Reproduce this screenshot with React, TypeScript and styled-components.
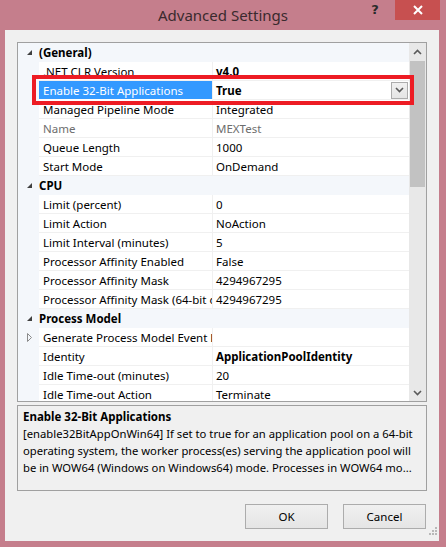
import styled, { createGlobalStyle } from "styled-components";

const Global = createGlobalStyle`
  html, body {
    margin: 0;
    padding: 0;
    background: #c57e8c;
  }
  body {
    font-family: "Segoe UI", "Noto Sans", "Open Sans", sans-serif;
    font-size: 11.5px;
    color: #000;
  }
`;

const Window = styled.div`
  width: 446px;
  height: 547px;
  display: flex;
  flex-direction: column;
  background: #c57e8c;
`;

const TitleBar = styled.div`
  height: 30px;
  display: grid;
  grid-template-columns: 1fr auto 1fr;
  align-items: start;
`;

const Title = styled.div`
  grid-column: 2;
  font-size: 15px;
  line-height: 30px;
  color: #3a2a2e;
`;

const Caption = styled.div`
  grid-column: 3;
  display: flex;
  justify-content: flex-end;
  align-items: flex-start;
  padding-right: 6px;
`;

const HelpButton = styled.div`
  width: 26px;
  height: 20px;
  font-family: "DejaVu Sans", sans-serif;
  font-weight: bold;
  font-size: 13px;
  line-height: 20px;
  text-align: center;
  color: #2b2b2b;
  margin-right: 7px;
`;

const CloseButton = styled.div`
  width: 45px;
  height: 20px;
  background: #c75050;
  display: flex;
  align-items: center;
  justify-content: center;
`;

const Client = styled.div`
  flex: 1;
  margin: 0 7px 6px 5px;
  background: #f0f0f0;
  padding: 12px 12px 0 12px;
  display: flex;
  flex-direction: column;
  position: relative;
`;

const GridWrap = styled.div`
  position: relative;
`;

const Grid = styled.div`
  height: 358px;
  border: 1px solid #a0a0a0;
  display: flex;
  background: #f4f7fb;
  overflow: hidden;
`;

const Rows = styled.div`
  flex: 1;
  overflow: hidden;
`;

const CategoryRow = styled.div`
  height: 19px;
  display: flex;
  align-items: center;
  font-weight: bold;
`;

const Gutter = styled.div`
  width: 21px;
  flex: none;
  height: 100%;
  display: flex;
  align-items: center;
  justify-content: center;
  padding-left: 2px;
  box-sizing: border-box;
`;

const PropRow = styled.div`
  height: 19px;
  display: flex;
`;

const NameCell = styled.div<{ $selected?: boolean; $disabled?: boolean }>`
  width: 174px;
  flex: none;
  box-sizing: border-box;
  padding-left: 4px;
  display: flex;
  align-items: center;
  white-space: nowrap;
  overflow: hidden;
  background: ${(p) => (p.$selected ? "#3399ff" : "#fff")};
  color: ${(p) => (p.$selected ? "#fff" : p.$disabled ? "#6d6d6d" : "#000")};
  border-bottom: 1px solid ${(p) => (p.$selected ? "#fff" : "#f0f0f0")};
  border-right: 1px solid #f0f0f0;
`;

const ValueCell = styled.div<{ $bold?: boolean; $disabled?: boolean }>`
  flex: 1;
  box-sizing: border-box;
  padding-left: 3px;
  display: flex;
  align-items: center;
  white-space: nowrap;
  overflow: hidden;
  background: #fff;
  font-weight: ${(p) => (p.$bold ? "bold" : "normal")};
  color: ${(p) => (p.$disabled ? "#6d6d6d" : "#000")};
  border-bottom: 1px solid #f0f0f0;
`;

const ValueText = styled.span`
  flex: 1;
`;

const DropButton = styled.div`
  width: 17px;
  height: 17px;
  box-sizing: border-box;
  border: 1px solid #acacac;
  background: linear-gradient(#f0f0f0, #e5e5e5);
  display: flex;
  align-items: center;
  justify-content: center;
  margin-right: 1px;
`;

const ScrollBar = styled.div`
  width: 17px;
  flex: none;
  background: #e8e8e8;
  display: flex;
  flex-direction: column;
  align-items: center;
`;

const ScrollArrow = styled.div`
  height: 17px;
  width: 100%;
  display: flex;
  align-items: center;
  justify-content: center;
`;

const ScrollThumb = styled.div`
  width: 15px;
  height: 126px;
  background: #c2c2c2;
  margin-top: 1px;
`;

const ScrollTrack = styled.div`
  flex: 1;
`;

const Highlight = styled.div`
  position: absolute;
  left: 15px;
  top: 33px;
  width: 374px;
  height: 22px;
  border: 4px solid #ed1c24;
  pointer-events: none;
`;

const Description = styled.div`
  margin-top: 3px;
  height: 82px;
  border: 1px solid #a0a0a0;
  padding: 2px 0 0 5px;
  overflow: hidden;
  font-size: 11.25px;
`;

const DescTitle = styled.div`
  font-weight: bold;
  font-size: 11.5px;
  line-height: 17px;
`;

const DescLine = styled.div`
  line-height: 17px;
  white-space: nowrap;
  overflow: hidden;
`;

const ButtonRow = styled.div`
  margin-top: 13px;
  display: flex;
  justify-content: flex-end;
  gap: 14px;
`;

const Button = styled.div`
  width: 83px;
  height: 25px;
  box-sizing: border-box;
  border: 1px solid #acacac;
  background: linear-gradient(#f0f0f0, #e5e5e5);
  display: flex;
  align-items: center;
  justify-content: center;
  margin-right: 1px;
`;

const Grip = styled.div`
  position: absolute;
  right: 2px;
  bottom: 3px;
`;

const Expanded = () => (
  <svg width="7" height="7" viewBox="0 0 7 7">
    <path d="M6 1 L6 6 L1 6 Z" fill="#404040" />
  </svg>
);

const Collapsed = () => (
  <svg width="7" height="9" viewBox="0 0 7 9">
    <path d="M1.5 0.5 L5.5 4.5 L1.5 8.5 Z" fill="none" stroke="#8a8a8a" />
  </svg>
);

const Chevron = ({ up }: { up?: boolean }) => (
  <svg width="9" height="6" viewBox="0 0 9 6">
    <path
      d={up ? "M1 5 L4.5 1.5 L8 5" : "M1 1 L4.5 4.5 L8 1"}
      fill="none"
      stroke="#5a5a5a"
      strokeWidth="1.6"
    />
  </svg>
);

type Prop = {
  name: string;
  value?: string;
  bold?: boolean;
  disabled?: boolean;
  selected?: boolean;
  collapsed?: boolean;
};

type Category = { title: string; props: Prop[] };

const categories: Category[] = [
  {
    title: "(General)",
    props: [
      { name: ".NET CLR Version", value: "v4.0", bold: true },
      { name: "Enable 32-Bit Applications", value: "True", bold: true, selected: true },
      { name: "Managed Pipeline Mode", value: "Integrated" },
      { name: "Name", value: "MEXTest", disabled: true },
      { name: "Queue Length", value: "1000" },
      { name: "Start Mode", value: "OnDemand" },
    ],
  },
  {
    title: "CPU",
    props: [
      { name: "Limit (percent)", value: "0" },
      { name: "Limit Action", value: "NoAction" },
      { name: "Limit Interval (minutes)", value: "5" },
      { name: "Processor Affinity Enabled", value: "False" },
      { name: "Processor Affinity Mask", value: "4294967295" },
      { name: "Processor Affinity Mask (64-bit option)", value: "4294967295" },
    ],
  },
  {
    title: "Process Model",
    props: [
      { name: "Generate Process Model Event Log Entry", value: "", collapsed: true },
      { name: "Identity", value: "ApplicationPoolIdentity", bold: true },
      { name: "Idle Time-out (minutes)", value: "20" },
      { name: "Idle Time-out Action", value: "Terminate" },
    ],
  },
];

export default function App() {
  return (
    <Window>
      <Global />
      <TitleBar>
        <Title>Advanced Settings</Title>
        <Caption>
          <HelpButton>?</HelpButton>
          <CloseButton>
            <svg width="10" height="10" viewBox="0 0 10 10">
              <path d="M1 1 L9 9 M9 1 L1 9" stroke="#fff" strokeWidth="2" />
            </svg>
          </CloseButton>
        </Caption>
      </TitleBar>
      <Client>
        <GridWrap>
          <Grid>
            <Rows>
              {categories.map((c) => (
                <div key={c.title}>
                  <CategoryRow>
                    <Gutter>
                      <Expanded />
                    </Gutter>
                    {c.title}
                  </CategoryRow>
                  {c.props.map((p) => (
                    <PropRow key={p.name}>
                      <Gutter>{p.collapsed && <Collapsed />}</Gutter>
                      <NameCell $selected={p.selected} $disabled={p.disabled}>
                        {p.name}
                      </NameCell>
                      <ValueCell $bold={p.bold} $disabled={p.disabled}>
                        <ValueText>{p.value}</ValueText>
                        {p.selected && (
                          <DropButton>
                            <Chevron />
                          </DropButton>
                        )}
                      </ValueCell>
                    </PropRow>
                  ))}
                </div>
              ))}
            </Rows>
            <ScrollBar>
              <ScrollArrow>
                <Chevron up />
              </ScrollArrow>
              <ScrollThumb />
              <ScrollTrack />
              <ScrollArrow>
                <Chevron />
              </ScrollArrow>
            </ScrollBar>
          </Grid>
          <Highlight />
        </GridWrap>
        <Description>
          <DescTitle>Enable 32-Bit Applications</DescTitle>
          <DescLine>
            [enable32BitAppOnWin64] If set to true for an application pool on a 64-bit
          </DescLine>
          <DescLine>
            operating system, the worker process(es) serving the application pool will
          </DescLine>
          <DescLine>
            be in WOW64 (Windows on Windows64) mode. Processes in WOW64 mo...
          </DescLine>
        </Description>
        <ButtonRow>
          <Button>OK</Button>
          <Button>Cancel</Button>
        </ButtonRow>
        <Grip>
          <svg width="8" height="8" viewBox="0 0 8 8">
            {[
              [6, 0],
              [6, 3],
              [3, 3],
              [6, 6],
              [3, 6],
              [0, 6],
            ].map(([x, y]) => (
              <rect key={`${x}-${y}`} x={x} y={y} width="2" height="2" fill="#b8b8b8" />
            ))}
          </svg>
        </Grip>
      </Client>
    </Window>
  );
}
